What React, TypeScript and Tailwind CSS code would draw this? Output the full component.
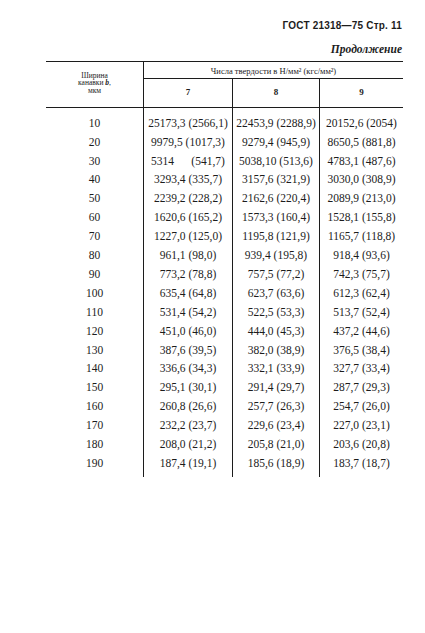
const rows: [string, string, string, string][] = [
  ['10', '25173,3 (2566,1)', '22453,9 (2288,9)', '20152,6 (2054)'],
  ['20', '9979,5 (1017,3)', '9279,4 (945,9)', '8650,5 (881,8)'],
  ['30', '5314\u2003\u2002(541,7)', '5038,10 (513,6)', '4783,1 (487,6)'],
  ['40', '3293,4 (335,7)', '3157,6 (321,9)', '3030,0 (308,9)'],
  ['50', '2239,2 (228,2)', '2162,6 (220,4)', '2089,9 (213,0)'],
  ['60', '1620,6 (165,2)', '1573,3 (160,4)', '1528,1 (155,8)'],
  ['70', '1227,0 (125,0)', '1195,8 (121,9)', '1165,7 (118,8)'],
  ['80', '961,1 (98,0)', '939,4 (195,8)', '918,4 (93,6)'],
  ['90', '773,2 (78,8)', '757,5 (77,2)', '742,3 (75,7)'],
  ['100', '635,4 (64,8)', '623,7 (63,6)', '612,3 (62,4)'],
  ['110', '531,4 (54,2)', '522,5 (53,3)', '513,7 (52,4)'],
  ['120', '451,0 (46,0)', '444,0 (45,3)', '437,2 (44,6)'],
  ['130', '387,6 (39,5)', '382,0 (38,9)', '376,5 (38,4)'],
  ['140', '336,6 (34,3)', '332,1 (33,9)', '327,7 (33,4)'],
  ['150', '295,1 (30,1)', '291,4 (29,7)', '287,7 (29,3)'],
  ['160', '260,8 (26,6)', '257,7 (26,3)', '254,7 (26,0)'],
  ['170', '232,2 (23,7)', '229,6 (23,4)', '227,0 (23,1)'],
  ['180', '208,0 (21,2)', '205,8 (21,0)', '203,6 (20,8)'],
  ['190', '187,4 (19,1)', '185,6 (18,9)', '183,7 (18,7)'],
]

const widths = ['w-[97px]', 'w-[89px]', 'w-[87px]', 'w-[84px]']

export default function App() {
  return (
    <div className="w-[425px] h-[633px] bg-white text-[#1c1c1c] font-['Liberation_Serif',serif]">
      <div className="flex justify-end pt-[19px] pr-[23px]">
        <span className="font-['Liberation_Sans',sans-serif] font-bold text-[10px] leading-[14px] tracking-[0.2px]">
          ГОСТ 21318—75 Стр. 11
        </span>
      </div>
      <div className="flex justify-end pt-[9px] pr-[23px]">
        <span className="italic font-bold text-[11.5px] leading-[14px]">Продолжение</span>
      </div>

      <div className="ml-[46px] mt-[5px] w-[357px]">
        {/* header */}
        <div className="grid grid-cols-[97px_89px_87px_84px] grid-rows-[16px_29px] border-t-[1.5px] border-b-[1.5px] border-[#1c1c1c]">
          <div className="row-span-2 flex flex-col items-center justify-center text-[7.5px] leading-[7.5px] pb-[3px]">
            <span>Ширина</span>
            <span>
              канавки <i className="font-bold">b</i>,
            </span>
            <span>мкм</span>
          </div>
          <div className="col-span-3 border-l border-[#1c1c1c] flex items-center justify-center text-[8.5px] pt-[2px]">
            Числа твердости в Н/мм² (кгс/мм²)
          </div>
          {['7', '8', '9'].map((h) => (
            <div
              key={h}
              className="border-l border-t border-[#1c1c1c] flex items-center justify-center text-[9px] font-bold"
            >
              {h}
            </div>
          ))}
        </div>

        {/* body */}
        <div className="flex">
          {widths.map((w, ci) => (
            <div
              key={w}
              className={`${w} flex flex-col pt-[6px] pb-[4px] ${ci > 0 ? 'border-l-[1.5px] border-[#1c1c1c]' : ''}`}
            >
              {rows.map((r) => (
                <div key={r[0]} className="h-[18.9px] flex items-center justify-center text-[11.5px] whitespace-pre">
                  {r[ci]}
                </div>
              ))}
            </div>
          ))}
        </div>
      </div>
    </div>
  )
}
